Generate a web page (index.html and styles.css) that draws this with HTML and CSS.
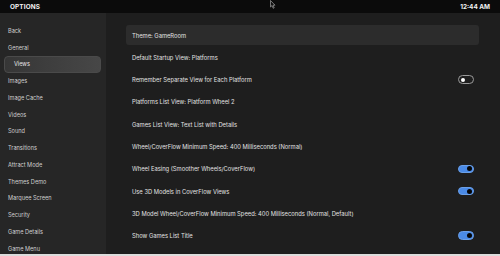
FILE: index.html
```html
<!DOCTYPE html>
<html lang="en">
<head>
  <meta charset="UTF-8">
  <title>Options</title>
  <link rel="stylesheet" href="styles.css">
</head>
<body>
<div class="app">

  <!-- Верхняя панель -->
  <div class="topbar">
    <div class="title">OPTIONS</div>
    <div class="clock">12:44 AM</div>
    <svg class="cursor" width="6" height="9" viewBox="0 0 6 9">
      <path d="M0.5 0.5 L0.5 7 L2 5.6 L3.2 8.3 L4.2 7.8 L3 5.2 L5 5.2 Z" fill="#111" stroke="#bbb" stroke-width="0.6"/>
    </svg>
  </div>

  <div class="main">
    <!-- Меню слева -->
    <div class="sidebar">
      <div class="nav-item">Back</div>
      <div class="nav-item">General</div>
      <div class="nav-item active">Views</div>
      <div class="nav-item">Images</div>
      <div class="nav-item">Image Cache</div>
      <div class="nav-item">Videos</div>
      <div class="nav-item">Sound</div>
      <div class="nav-item">Transitions</div>
      <div class="nav-item">Attract Mode</div>
      <div class="nav-item">Themes Demo</div>
      <div class="nav-item">Marquee Screen</div>
      <div class="nav-item">Security</div>
      <div class="nav-item">Game Details</div>
      <div class="nav-item">Game Menu</div>
    </div>

    <!-- Настройки -->
    <div class="content">
      <div class="row focused"><span>Theme: GameRoom</span></div>
      <div class="row"><span>Default Startup View: Platforms</span></div>
      <div class="row"><span>Remember Separate View for Each Platform</span><div class="toggle"></div></div>
      <div class="row"><span>Platforms List View: Platform Wheel 2</span></div>
      <div class="row"><span>Games List View: Text List with Details</span></div>
      <div class="row"><span>Wheel/CoverFlow Minimum Speed: 400 Milliseconds (Normal)</span></div>
      <div class="row"><span>Wheel Easing (Smoother Wheels/CoverFlow)</span><div class="toggle on"></div></div>
      <div class="row"><span>Use 3D Models in CoverFlow Views</span><div class="toggle on"></div></div>
      <div class="row"><span>3D Model Wheel/CoverFlow Minimum Speed: 400 Milliseconds (Normal, Default)</span></div>
      <div class="row"><span>Show Games List Title</span><div class="toggle on"></div></div>
      <div class="row"><span></span><div class="toggle on"></div></div>
    </div>
  </div>

  <div class="bottom-strip"></div>
</div>
</body>
</html>
```

FILE: styles.css
```css
:root {
  --top-bg: #0b0b0b;
  --side-bg: #262626;
  --main-bg: #1e1e1e;
  --text-main: #e2e2e2;
  --text-side: #cfcfcf;
  --accent: #4a8ae6;
}

* { box-sizing: border-box; }

body {
  margin: 0;
  width: 500px;
  height: 256px;
  overflow: hidden;
  font-family: Inter, "Noto Sans", sans-serif;
  background: var(--main-bg);
  color: var(--text-main);
}

.app {
  height: 256px;
  display: flex;
  flex-direction: column;
}

/* ВЕРХ */

.topbar {
  position: relative;
  height: 13px;
  flex: none;
  background: var(--top-bg);
  display: flex;
  align-items: center;
  justify-content: space-between;
  padding: 0 10px 0 10px;
  font-size: 6.4px;
  font-weight: 700;
  color: #f2f2f2;
}

.title { letter-spacing: 0.02em; }

.cursor {
  position: absolute;
  left: 270px;
  top: 0;
}

.main {
  flex: 1;
  min-height: 0;
  display: flex;
}

/* МЕНЮ */

.sidebar {
  width: 106px;
  flex: none;
  background: var(--side-bg);
  padding: 9.5px 5px 0 4px;
  display: flex;
  flex-direction: column;
}

.nav-item {
  height: 16.75px;
  flex: none;
  display: flex;
  align-items: center;
  padding-left: 4px;
  font-size: 5.6px;
  color: var(--text-side);
}

.nav-item.active {
  padding-left: 9px;
  border-radius: 4px;
  background: linear-gradient(90deg, #363636, #474747);
  border: 1px solid #4a4a4a;
  color: #e6e6e6;
}

/* НАСТРОЙКИ */

.content {
  flex: 1;
  padding: 12px 21px 0 20px;
  display: flex;
  flex-direction: column;
  gap: 2.3px;
  overflow: hidden;
}

.row {
  height: 20px;
  flex: none;
  display: flex;
  align-items: center;
  justify-content: space-between;
  padding: 0 5px 0 6px;
  font-size: 5.8px;
  color: var(--text-main);
}

.row.focused {
  background: #2c2c2c;
  border-radius: 3px;
}

.toggle {
  position: relative;
  width: 16px;
  height: 8.5px;
  border-radius: 999px;
  border: 1px solid #9a9a9a;
  flex: none;
}

.toggle::after {
  content: "";
  position: absolute;
  top: 1.2px;
  left: 1.5px;
  width: 4.2px;
  height: 4.2px;
  border-radius: 50%;
  background: #fff;
}

.toggle.on {
  background: var(--accent);
  border-color: #6a9fe8;
}

.toggle.on::after {
  left: auto;
  right: 1.5px;
  top: 0.8px;
  width: 5px;
  height: 5px;
  background: #050505;
}

.bottom-strip {
  height: 2px;
  flex: none;
  background: #dcdcdc;
}
```
